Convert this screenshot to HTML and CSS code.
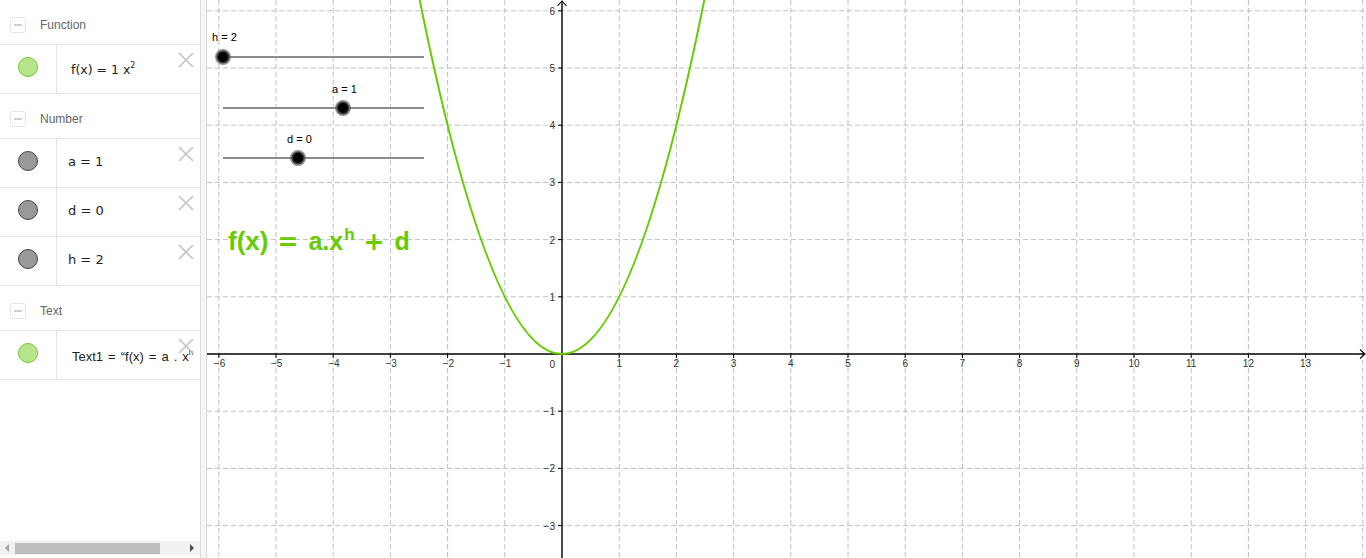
FILE: index.html
```html
<!DOCTYPE html>
<html lang="en">
<head>
<meta charset="utf-8">
<title>GeoGebra</title>
<link rel="stylesheet" href="styles.css">
</head>
<body>
<div class="app">
  <aside class="panel">
    <div class="group-header"><span class="toggle"></span><span class="group-title">Function</span></div>
    <div class="item">
      <div class="marble-cell"><span class="marble green"></span></div>
      <div class="item-text math fx">f(x) = 1 x<sup class="sup-small">2</sup></div>
      <svg class="close" viewBox="0 0 16 16"><path d="M1 1L15 15M15 1L1 15"/></svg>
    </div>
    <div class="group-header"><span class="toggle"></span><span class="group-title">Number</span></div>
    <div class="item">
      <div class="marble-cell"><span class="marble gray"></span></div>
      <div class="item-text math">a = 1</div>
      <svg class="close" viewBox="0 0 16 16"><path d="M1 1L15 15M15 1L1 15"/></svg>
    </div>
    <div class="item">
      <div class="marble-cell"><span class="marble gray"></span></div>
      <div class="item-text math">d = 0</div>
      <svg class="close" viewBox="0 0 16 16"><path d="M1 1L15 15M15 1L1 15"/></svg>
    </div>
    <div class="item">
      <div class="marble-cell"><span class="marble gray"></span></div>
      <div class="item-text math">h = 2</div>
      <svg class="close" viewBox="0 0 16 16"><path d="M1 1L15 15M15 1L1 15"/></svg>
    </div>
    <div class="group-header"><span class="toggle"></span><span class="group-title">Text</span></div>
    <div class="item">
      <div class="marble-cell"><span class="marble green"></span></div>
      <div class="item-text plain">Text1 = “f(x) = a . x<sup class="sup-small">h</sup></div>
      <svg class="close" viewBox="0 0 16 16"><path d="M1 1L15 15M15 1L1 15"/></svg>
    </div>
    <div class="scrollbar">
      <span class="arrow left"></span>
      <div class="track"><div class="thumb"></div></div>
      <span class="arrow right"></span>
    </div>
  </aside>
  <div class="splitter"></div>
  <main class="graph">
    <svg class="plot" width="1159" height="558" viewBox="0 0 1159 558">
      <g class="grid">
        <line x1="11.8" y1="0" x2="11.8" y2="558"/>
        <line x1="69" y1="0" x2="69" y2="558"/>
        <line x1="126.2" y1="0" x2="126.2" y2="558"/>
        <line x1="183.4" y1="0" x2="183.4" y2="558"/>
        <line x1="240.6" y1="0" x2="240.6" y2="558"/>
        <line x1="297.8" y1="0" x2="297.8" y2="558"/>
        <line x1="412.2" y1="0" x2="412.2" y2="558"/>
        <line x1="469.4" y1="0" x2="469.4" y2="558"/>
        <line x1="526.6" y1="0" x2="526.6" y2="558"/>
        <line x1="583.8" y1="0" x2="583.8" y2="558"/>
        <line x1="641" y1="0" x2="641" y2="558"/>
        <line x1="698.2" y1="0" x2="698.2" y2="558"/>
        <line x1="755.4" y1="0" x2="755.4" y2="558"/>
        <line x1="812.6" y1="0" x2="812.6" y2="558"/>
        <line x1="869.8" y1="0" x2="869.8" y2="558"/>
        <line x1="927" y1="0" x2="927" y2="558"/>
        <line x1="984.2" y1="0" x2="984.2" y2="558"/>
        <line x1="1041.4" y1="0" x2="1041.4" y2="558"/>
        <line x1="1098.6" y1="0" x2="1098.6" y2="558"/>
        <line x1="1155.8" y1="0" x2="1155.8" y2="558"/>
        <line x1="0" y1="10.8" x2="1159" y2="10.8"/>
        <line x1="0" y1="68" x2="1159" y2="68"/>
        <line x1="0" y1="125.2" x2="1159" y2="125.2"/>
        <line x1="0" y1="182.4" x2="1159" y2="182.4"/>
        <line x1="0" y1="239.6" x2="1159" y2="239.6"/>
        <line x1="0" y1="296.8" x2="1159" y2="296.8"/>
        <line x1="0" y1="411.2" x2="1159" y2="411.2"/>
        <line x1="0" y1="468.4" x2="1159" y2="468.4"/>
        <line x1="0" y1="525.6" x2="1159" y2="525.6"/>
      </g>
      <g class="axes">
        <line x1="0" y1="354" x2="1158" y2="354"/>
        <line x1="355" y1="558" x2="355" y2="1"/>
        <path class="arrowhead" d="M1153 349.5L1158 354L1153 358.5"/>
        <path class="arrowhead" d="M350.5 6L355 1L359.5 6"/>
      </g>
      <g class="ticks">
        <path d="M11.8 354v4M69 354v4M126.2 354v4M183.4 354v4M240.6 354v4M297.8 354v4M412.2 354v4M469.4 354v4M526.6 354v4M583.8 354v4M641 354v4M698.2 354v4M755.4 354v4M812.6 354v4M869.8 354v4M927 354v4M984.2 354v4M1041.4 354v4M1098.6 354v4M355 10.8h-4M355 68h-4M355 125.2h-4M355 182.4h-4M355 239.6h-4M355 296.8h-4M355 411.2h-4M355 468.4h-4M355 525.6h-4"/>
      </g>
      <g class="xlabels">
        <text x="12.5" y="367">−6</text>
        <text x="69.7" y="367">−5</text>
        <text x="126.9" y="367">−4</text>
        <text x="184.1" y="367">−3</text>
        <text x="241.3" y="367">−2</text>
        <text x="298.5" y="367">−1</text>
        <text x="412.2" y="367">1</text>
        <text x="469.4" y="367">2</text>
        <text x="526.6" y="367">3</text>
        <text x="583.8" y="367">4</text>
        <text x="641" y="367">5</text>
        <text x="698.2" y="367">6</text>
        <text x="755.4" y="367">7</text>
        <text x="812.6" y="367">8</text>
        <text x="869.8" y="367">9</text>
        <text x="927" y="367">10</text>
        <text x="984.2" y="367">11</text>
        <text x="1041.4" y="367">12</text>
        <text x="1098.6" y="367">13</text>
      </g>
      <g class="ylabels">
        <text x="348" y="14.8">6</text>
        <text x="348" y="72">5</text>
        <text x="348" y="129.2">4</text>
        <text x="348" y="186.4">3</text>
        <text x="348" y="243.6">2</text>
        <text x="348" y="300.8">1</text>
        <text x="348" y="368">0</text>
        <text x="348" y="415.2">−1</text>
        <text x="348" y="472.4">−2</text>
        <text x="348" y="529.6">−3</text>
      </g>
      <path class="curve" d="M212 -3.5Q355 711.5 498 -3.5"/>
      <g class="slider">
        <line class="track-line" x1="16" y1="57" x2="217" y2="57"/>
        <circle class="knob" cx="16" cy="57" r="6.5"/>
        <text x="5" y="41">h = 2</text>
      </g>
      <g class="slider">
        <line class="track-line" x1="16" y1="108" x2="217" y2="108"/>
        <circle class="knob" cx="136" cy="108" r="6.5"/>
        <text x="125" y="93">a = 1</text>
      </g>
      <g class="slider">
        <line class="track-line" x1="16" y1="158" x2="217" y2="158"/>
        <circle class="knob" cx="91" cy="158" r="6.5"/>
        <text x="80" y="143">d = 0</text>
      </g>
    </svg>
    <div class="formula"><span class="paren">f(x)</span><span class="op">=</span><span>a.x<sup class="sup-big">h</sup></span><span class="op">+</span><span>d</span></div>
  </main>
</div>
</body>
</html>
```
FILE: styles.css
```css
html, body {
  margin: 0;
  padding: 0;
  width: 1366px;
  height: 558px;
  overflow: hidden;
  background: #fff;
  font-family: "Liberation Sans", Arial, sans-serif;
}

.app {
  display: flex;
  height: 558px;
}

/* ---------- algebra panel ---------- */
.panel {
  width: 200px;
  flex: 0 0 200px;
  border-right: 1px solid #dcdcdc;
  display: flex;
  flex-direction: column;
  overflow: hidden;
  background: #fff;
}

.group-header {
  height: 44px;
  flex: 0 0 44px;
  box-sizing: border-box;
  border-bottom: 1px solid #e4e4e4;
  display: flex;
  align-items: center;
  padding-left: 10px;
  padding-top: 5px;
}

.group-header {
  height: 45px;
  flex: 0 0 45px;
}

.toggle {
  width: 14px;
  height: 14px;
  border: 1px solid #e4e4e4;
  border-radius: 3px;
  display: flex;
  align-items: center;
  justify-content: center;
  margin-right: 14px;
}

.toggle::before {
  content: "";
  width: 8px;
  height: 2px;
  background: #cfcfcf;
}

.group-title {
  font-size: 12px;
  color: #666;
}

.item {
  height: 49px;
  flex: 0 0 49px;
  box-sizing: border-box;
  border-bottom: 1px solid #e4e4e4;
  display: flex;
  position: relative;
}

.marble-cell {
  width: 57px;
  flex: 0 0 57px;
  box-sizing: border-box;
  border-right: 1px solid #e4e4e4;
  display: flex;
  justify-content: center;
  align-items: flex-start;
  padding-top: 12px;
}

.marble {
  width: 20px;
  height: 20px;
  border-radius: 50%;
  box-sizing: border-box;
}

.marble.green {
  background: #b6e58c;
  border: 1.5px solid #74c830;
}

.marble.gray {
  background: #999;
  border: 1.5px solid #444;
}

.item-text {
  white-space: nowrap;
  color: #222;
  line-height: 16px;
}

.item-text.math {
  font-family: "DejaVu Sans", sans-serif;
  font-size: 13px;
  padding-left: 11px;
  padding-top: 14.5px;
}

.item-text.math.fx {
  padding-left: 14px;
  padding-top: 16.5px;
  font-size: 12.5px;
}

.item-text.plain {
  font-family: "Liberation Sans", Arial, sans-serif;
  font-size: 13px;
  word-spacing: 1.4px;
  padding-left: 15px;
  padding-top: 17.5px;
}

.sup-small {
  font-size: 8px;
  line-height: 0;
  vertical-align: 6px;
}

.close {
  position: absolute;
  right: 6px;
  top: 7px;
  width: 16px;
  height: 16px;
  overflow: visible;
}

.close path {
  stroke: #c4c4c4;
  stroke-width: 1.7;
  fill: none;
}

.scrollbar {
  margin-top: auto;
  margin-bottom: 3px;
  height: 14px;
  flex: 0 0 14px;
  background: #f1f1f1;
  display: flex;
  align-items: center;
}

.arrow {
  width: 0;
  height: 0;
  border-top: 4px solid transparent;
  border-bottom: 4px solid transparent;
}

.arrow.left {
  border-right: 4px solid #a3a3a3;
  margin: 0 6px 0 5px;
}

.arrow.right {
  border-left: 4px solid #505050;
  margin: 0 6px 0 2px;
}

.track {
  flex: 1;
  height: 11px;
  display: flex;
}

.thumb {
  width: 145px;
  height: 11px;
  background: #bdbdbd;
}

/* ---------- splitter ---------- */
.splitter {
  width: 5px;
  flex: 0 0 5px;
  background: #f6f6f6;
  border-right: 1px solid #dadada;
}

/* ---------- graphics view ---------- */
.graph {
  flex: 1;
  position: relative;
  overflow: hidden;
  background: #fff;
}

.plot {
  display: block;
}

.grid line {
  stroke: #c0c0c0;
  stroke-width: 1;
  stroke-dasharray: 5 3;
}

.axes line {
  stroke: #000;
  stroke-width: 1.4;
}

.arrowhead {
  stroke: #000;
  stroke-width: 1.1;
  fill: none;
}

.ticks path {
  stroke: #000;
  stroke-width: 1;
}

.xlabels text,
.ylabels text {
  font-family: "Liberation Sans", Arial, sans-serif;
  font-size: 10px;
  fill: #333;
}

.xlabels text {
  text-anchor: middle;
}

.ylabels text {
  text-anchor: end;
}

.curve {
  fill: none;
  stroke: #66cc00;
  stroke-width: 2;
}

.track-line {
  stroke: #8c8c8c;
  stroke-width: 2;
}

.knob {
  fill: #000;
  stroke: rgba(90, 90, 90, 0.65);
  stroke-width: 3;
}

.slider text {
  font-family: "Liberation Sans", Arial, sans-serif;
  font-size: 11px;
  fill: #000;
}

.formula {
  position: absolute;
  left: 21px;
  top: 226px;
  font-family: "Liberation Sans", Arial, sans-serif;
  font-weight: bold;
  font-size: 25px;
  line-height: 30px;
  color: #66cc00;
  white-space: nowrap;
}

.formula .paren {
  font-size: 26px;
}

.formula .op {
  font-family: "DejaVu Sans", sans-serif;
  font-size: 25px;
  line-height: 30px;
  margin: 0 10px 0 9px;
}

.sup-big {
  font-size: 17px;
  line-height: 0;
  vertical-align: 10px;
  margin-left: 1px;
}
```
